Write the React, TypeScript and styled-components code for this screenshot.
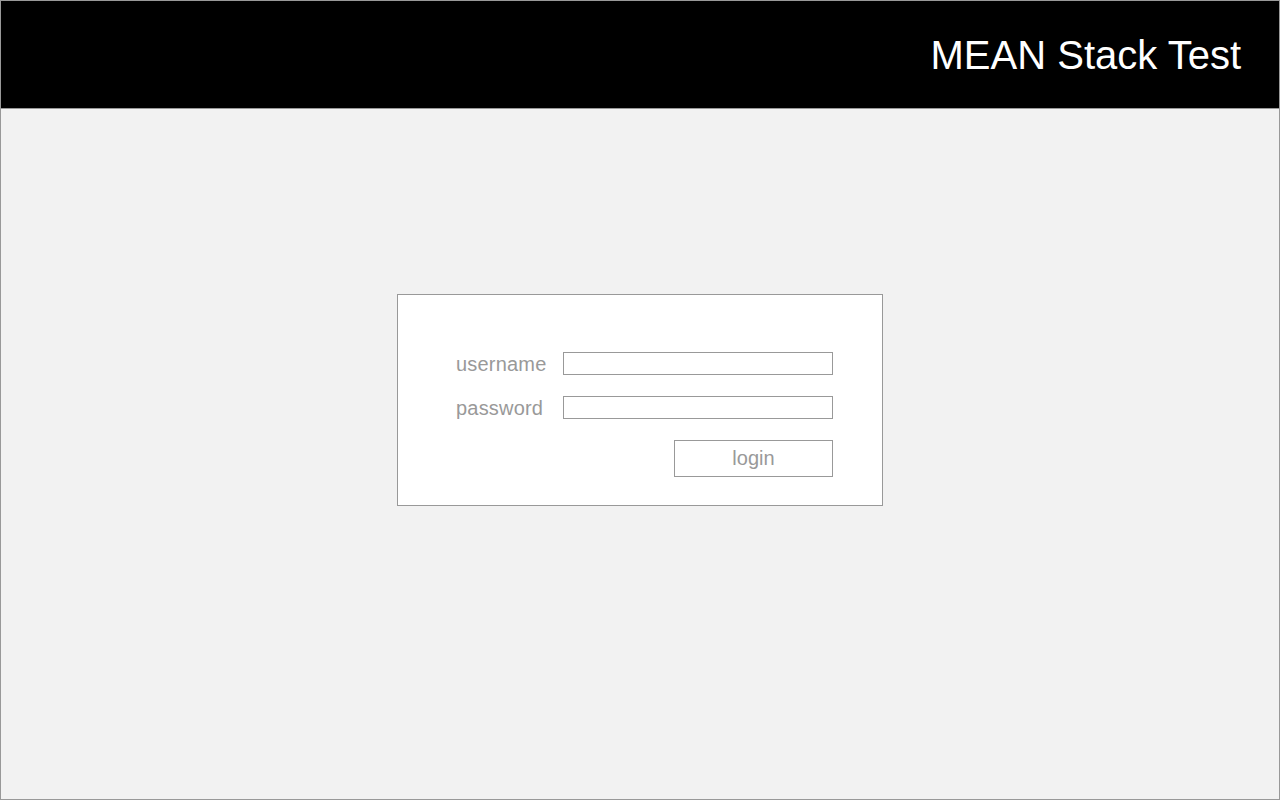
import React from "react";
import styled, { createGlobalStyle } from "styled-components";

const GlobalStyle = createGlobalStyle`
  html, body { margin: 0; padding: 0; }
  body { font-family: "Liberation Sans", Arial, Helvetica, sans-serif; }
  * { box-sizing: border-box; }
`;

const Frame = styled.div`
  width: 1280px;
  height: 800px;
  border: 1px solid #999;
  background: #f2f2f2;
  display: flex;
  flex-direction: column;
`;

const Header = styled.header`
  height: 108px;
  flex: none;
  background: #000;
  border-bottom: 1px solid #999;
  display: flex;
  align-items: center;
  justify-content: flex-end;
  padding: 2px 38px 0 0;
`;

const Title = styled.h1`
  margin: 0;
  font-weight: 400;
  font-size: 40px;
  color: #fff;
`;

const Main = styled.main`
  flex: 1;
  display: flex;
  justify-content: center;
  align-items: flex-start;
  padding-top: 185px;
`;

const Card = styled.form`
  width: 486px;
  height: 212px;
  background: #fff;
  border: 1px solid #999;
  padding: 57px 49px 0 0;
  display: grid;
  grid-template-columns: 88px 270px;
  grid-auto-rows: 23px;
  justify-content: end;
  align-content: start;
  column-gap: 19px;
  row-gap: 21px;
`;

const Label = styled.label`
  font-size: 20px;
  color: #999;
  text-align: left;
  line-height: 23px;
  height: 23px;
  letter-spacing: 0.2px;
  white-space: nowrap;
  padding-top: 1px;
`;

const Input = styled.input`
  width: 270px;
  height: 23px;
  border: 1px solid #999;
  background: #fff;
  margin: 0;
  padding: 0 4px;
  outline: none;
  font-family: inherit;
`;

const Button = styled.button`
  grid-column: 2;
  justify-self: end;
  width: 159px;
  height: 37px;
  border: 1px solid #999;
  background: #fff;
  color: #999;
  font-family: inherit;
  font-size: 20px;
  padding: 0;
  margin: 0;
  cursor: pointer;
`;

export default function App() {
  return (
    <>
      <GlobalStyle />
      <Frame>
        <Header>
          <Title>MEAN Stack Test</Title>
        </Header>
        <Main>
          <Card onSubmit={(e) => e.preventDefault()}>
            <Label htmlFor="username">username</Label>
            <Input id="username" type="text" />
            <Label htmlFor="password">password</Label>
            <Input id="password" type="password" />
            <Button type="submit">login</Button>
          </Card>
        </Main>
      </Frame>
    </>
  );
}
